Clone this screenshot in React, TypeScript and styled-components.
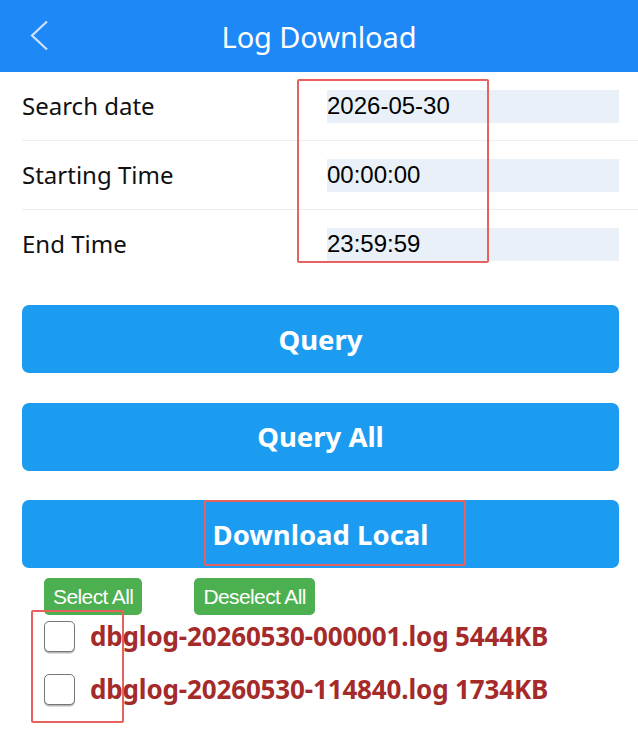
import styled, { createGlobalStyle } from "styled-components";

const GlobalStyle = createGlobalStyle`
    body {
        margin: 0;
        background: #ffffff;
        font-family: "Noto Sans", "Open Sans", sans-serif;
    }
`;

const Page = styled.div`
    position: relative;
    width: 638px;
    min-height: 744px;
    background: #ffffff;
`;

const Header = styled.header`
    display: grid;
    grid-template-columns: 72px 1fr 72px;
    align-items: center;
    height: 72px;
    background: #1e88f7;
`;

const BackButton = styled.button`
    display: flex;
    align-items: center;
    justify-content: flex-start;
    padding: 0 0 0 30px;
    height: 72px;
    border: none;
    background: transparent;
    cursor: pointer;
`;

const Title = styled.h1`
    margin: 0;
    text-align: center;
    font-size: 29px;
    font-weight: 400;
    color: #ffffff;
    letter-spacing: -0.1px;
`;

const Form = styled.div`
    padding-left: 22px;
`;

const Row = styled.div<{ $last?: boolean }>`
    display: flex;
    align-items: center;
    height: 68px;
    border-bottom: ${(p) => (p.$last ? "none" : "1px solid #eeeeee")};
`;

const Label = styled.span`
    width: 305px;
    font-size: 24px;
    color: #111111;
    margin-top: -2px;
`;

const Field = styled.input`
    box-sizing: border-box;
    width: 292px;
    height: 33px;
    padding: 0;
    border: none;
    outline: none;
    background: #e9f0f8;
    font-family: "Liberation Sans", Arial, sans-serif;
    font-size: 24px;
    color: #000000;
`;

const Actions = styled.div`
    display: flex;
    flex-direction: column;
    gap: 29.5px;
    margin: 27px 19px 0 22px;
`;

const ActionButton = styled.button`
    height: 68px;
    border: none;
    border-radius: 7px;
    background: #1c9cf0;
    color: #ffffff;
    font-family: "Noto Sans", "Open Sans", sans-serif;
    font-size: 27.5px;
    font-weight: 700;
    cursor: pointer;
`;

const Toolbar = styled.div`
    display: flex;
    gap: 52px;
    margin-top: 10px;
    padding-left: 44px;
`;

const GreenButton = styled.button`
    height: 37px;
    padding: 0 9px;
    border: none;
    border-radius: 5px;
    background: #4caf50;
    color: #ffffff;
    font-family: "Liberation Sans", Arial, sans-serif;
    font-size: 21px;
    letter-spacing: -0.6px;
    cursor: pointer;
`;

const FileList = styled.ul`
    display: flex;
    flex-direction: column;
    gap: 22px;
    margin: 0;
    padding: 6px 0 0 44px;
    list-style: none;
`;

const FileRow = styled.li`
    display: flex;
    align-items: center;
    height: 31px;
`;

const Check = styled.input`
    appearance: none;
    box-sizing: border-box;
    width: 31px;
    height: 31px;
    margin: 0 15px 0 0;
    border: 1.5px solid #767676;
    border-radius: 5px;
    background: #ffffff;
    box-shadow: 0 1.5px 0 #b8b8b8;
`;

const FileName = styled.span`
    font-size: 26px;
    font-weight: 700;
    color: #a52a2a;
    letter-spacing: -0.15px;
    margin-top: -2px;
`;

const Mark = styled.div<{ $x: number; $y: number; $w: number; $h: number }>`
    position: absolute;
    left: ${(p) => p.$x}px;
    top: ${(p) => p.$y}px;
    width: ${(p) => p.$w}px;
    height: ${(p) => p.$h}px;
    box-sizing: border-box;
    border: 2.5px solid #e8615f;
    border-radius: 2px;
    pointer-events: none;
`;

const fields = [
    { label: "Search date", value: "2026-05-30" },
    { label: "Starting Time", value: "00:00:00" },
    { label: "End Time", value: "23:59:59" },
];

const files = [
    "dbglog-20260530-000001.log 5444KB",
    "dbglog-20260530-114840.log 1734KB",
];

function App() {
    return (
        <Page>
            <GlobalStyle />
            <Header>
                <BackButton aria-label="back">
                    <svg width="20" height="32" viewBox="0 0 20 32">
                        <polyline
                            points="17,1.5 2,15.5 17,29.5"
                            fill="none"
                            stroke="#cfe2ff"
                            strokeWidth="2.2"
                        />
                    </svg>
                </BackButton>
                <Title>Log Download</Title>
                <span />
            </Header>

            <Form>
                {fields.map((f, i) => (
                    <Row key={f.label} $last={i === fields.length - 1}>
                        <Label>{f.label}</Label>
                        <Field defaultValue={f.value} readOnly />
                    </Row>
                ))}
            </Form>

            <Actions>
                <ActionButton>Query</ActionButton>
                <ActionButton>Query All</ActionButton>
                <ActionButton>Download Local</ActionButton>
            </Actions>

            <Toolbar>
                <GreenButton>Select All</GreenButton>
                <GreenButton>Deselect All</GreenButton>
            </Toolbar>

            <FileList>
                {files.map((name) => (
                    <FileRow key={name}>
                        <Check type="checkbox" />
                        <FileName>{name}</FileName>
                    </FileRow>
                ))}
            </FileList>

            {/* 스크린샷 위의 빨간 표시 */}
            <Mark $x={297} $y={79} $w={192} $h={184} />
            <Mark $x={204} $y={500} $w={262} $h={66} />
            <Mark $x={31} $y={610} $w={93} $h={113} />
        </Page>
    );
}

export default App;
